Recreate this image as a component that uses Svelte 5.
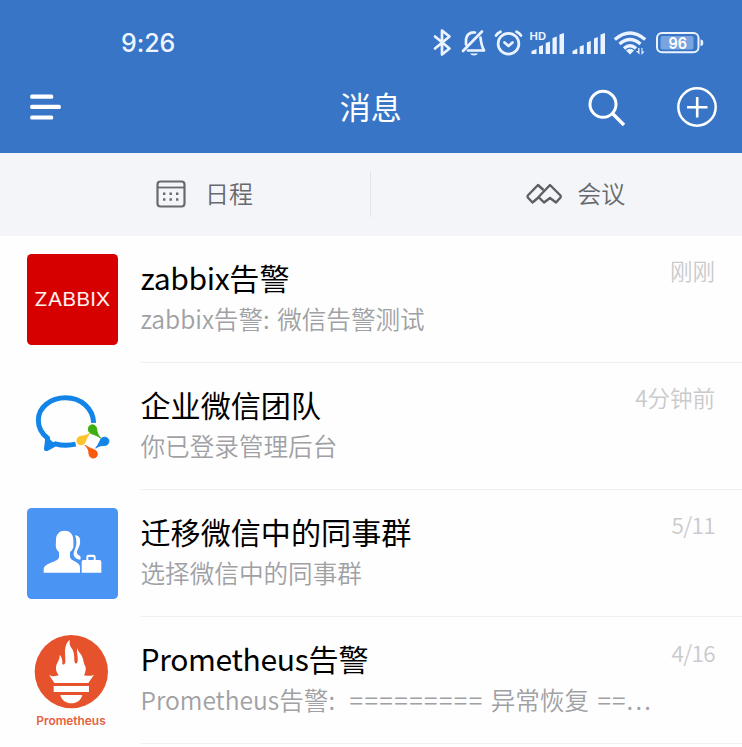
<script>
  const chats = [
    { id: 'zabbix', latin: 'zabbix', name: '告警', pre: 'zabbix', post: '告警: 微信告警测试', time: '刚刚' },
    { id: 'team', latin: '', name: '企业微信团队', pre: '', post: '你已登录管理后台', time: '4分钟前' },
    { id: 'group', latin: '', name: '迁移微信中的同事群', pre: '', post: '选择微信中的同事群', time: '5/11' },
    { id: 'prom', latin: 'Prometheus', name: '告警', pre: 'Prometheus', post: '告警:', eq: '=========', tail: '异常恢复', end: '==', dots: '...', time: '4/16' }
  ];
</script>

<div class="screen">
  <header>
    <div class="status">
      <span class="clock">9:26</span>
      <div class="indicators">
        <svg width="26" height="36" viewBox="430 26 26 36" class="line"><path d="M435 36.5 449.5 48.500 442 54.500V30.500L449.500 36.500 435 48.500" /></svg>
        <svg width="34" height="36" viewBox="456 26 34 36" class="line"><path d="M463 51 482 31.500M466 44.500V41C466 35 469.500 32 475 32.500M480.500 37.500C481 43 481.500 46 484 50.500H468" /><path d="M470 53.500H478Q477 55.500 474 55.500T470 53.500Z" fill="#eaf3ff" stroke="none" /></svg>
        <svg width="38" height="36" viewBox="490 26 38 36" class="line"><circle cx="508.500" cy="43.700" r="10.400" /><path d="M496 35.500Q497.500 33 500.500 31.700M516.500 31.700Q519.500 33 521 35.500M504.500 42.500 508.500 46 512.500 42.500" /></svg>
        <svg width="40" height="36" viewBox="528 26 40 36" fill="#eaf3ff"><text x="529.500" y="39.500" font-size="10" font-weight="700" textLength="16.500" lengthAdjust="spacingAndGlyphs" font-family="Inter, sans-serif">HD</text><path d="M531.500 54V51L536.500 49V54ZM539 54V46.500L543 45V54ZM545.700 54V43L550 41.500V54ZM552.500 54V38L556.800 36.500V54ZM559.500 54V34.500L564 33V54Z" /></svg>
        <svg width="42" height="36" viewBox="568 26 42 36" fill="#eaf3ff"><path d="M572.500 54V51L577.300 48.500V54ZM579.700 54V46.500L583.800 45V54ZM586.900 54V42.500L590.800 41V54ZM594 54V38.500L597.800 37V54ZM600.500 54V34.500L605 33V54Z" /></svg>
        <svg width="40" height="36" viewBox="610 26 40 36" class="line"><path stroke-width="3.400" stroke-linecap="butt" d="M614.800 39.500Q630 26.500 645.200 39.500M619.500 44Q630 35 640.500 44M624 48.500Q630 43 636 48.500" /><path fill="#eaf3ff" stroke="none" d="M626 50.500Q630 47 634 50.500L630 54.500ZM636 51H638.200V48H639.500V54.500ZM641 54.500V48.500L641.500 48V55L644.500 51.500H642.500V48H641Z" /></svg>
        <svg width="60" height="36" viewBox="650 26 60 36"><rect x="657" y="33" width="41.500" height="19.200" rx="5" fill="none" stroke="#eaf3ff" stroke-width="2" /><rect x="660.500" y="36" width="33" height="13.500" rx="2" fill="#78a4df" /><path fill="#eaf3ff" d="M700.500 39.500Q703.300 39.500 703.300 42.700T700.500 46Z" /><text x="668.500" y="48.500" font-size="15.500" font-weight="600" textLength="18.500" lengthAdjust="spacingAndGlyphs" fill="#fff" font-family="Inter, sans-serif">96</text></svg>
      </div>
    </div>
    <div class="nav">
      <div class="side"><svg width="32" height="28" viewBox="0 0 32 28" fill="#fff"><rect y="1.500" x=".2" width="23" height="4.200" rx="1.500" /><rect x=".2" y="11.800" width="30.600" height="4.200" rx="1.500" /><rect x=".2" y="22.400" width="23" height="4.200" rx="1.500" /></svg></div>
      <h1>消息</h1>
      <div class="side right">
        <svg width="40" height="40" viewBox="587 87 40 40" fill="none" stroke="#fff" stroke-width="3"><circle cx="603" cy="104.300" r="13" /><path d="M612.500 113.500 624 125" stroke-width="3.400" /></svg>
        <svg width="42" height="42" viewBox="675.500 86 42 42" fill="none" stroke="#fff" stroke-width="2.500"><circle cx="696.500" cy="107" r="18.700" /><path d="M686.500 107.200H707M696.700 97V117.500" stroke-width="2.600" /></svg>
      </div>
    </div>
  </header>

  <div class="tabs">
    <div class="tab">
      <svg width="32" height="30" viewBox="155.500 179 32 30"><rect x="158" y="181.500" width="27" height="25" rx="3" fill="none" stroke="#666a70" stroke-width="2.200" /><path d="M158 187.500H185" stroke="#666a70" stroke-width="1.800" /><path d="M163.500 192.500h2.400v2.400h-2.400zm6.500 0h2.400v2.400h-2.400zm6.500 0h2.400v2.400h-2.400zm-13 5.800h2.400v2.400h-2.400zm6.500 0h2.400v2.400h-2.400zm6.500 0h2.400v2.400h-2.400z" fill="#666a70" /></svg>
      <span>日程</span>
    </div>
    <i></i>
    <div class="tab second">
      <svg width="38" height="24" viewBox="525.500 181 38 24" fill="none" stroke="#5c6066" stroke-width="2.400" stroke-linejoin="round"><path d="M544 189 538.500 184 528.300 194.500Q527.800 195.500 528.300 196.500L533 201.500 539.500 196" /><path d="M550.500 184 539.500 195.500V196.500L544.500 201.500 550.500 197 556.500 201.500 561 196.500Q561.500 195.500 561 194.500Z" /></svg>
      <span>会议</span>
    </div>
  </div>

  <main>
    {#each chats as c}
      <div class="row">
        {#if c.id === 'zabbix'}
          <svg class="avatar" viewBox="20 27 273 273"><rect x="20" y="27" width="273" height="273" rx="14" fill="#d60000" /><text x="42" y="184" font-size="58" textLength="228" lengthAdjust="spacingAndGlyphs" fill="#fff0ef" font-family="Inter, sans-serif">ZABBIX</text></svg>
        {:else if c.id === 'team'}
          <svg class="avatar" viewBox="23 18.500 273 273">
            <path d="M223 144C221 101 185 69 139 69C93 69 57 98 57 136C57 158 67 176 85 190L82 221 108 207Q137 215 169 208" fill="none" stroke="#1485e8" stroke-width="15" stroke-linejoin="round" />
            <path fill="#1485e8" d="M82 185 74 224Q77 231 84 227L112 211Z" />
            <path fill="#3fae13" d="M207 163C207 146 230 146 232 162C233 174 236 181 244 190C234 182 226 180 217 177Q207 173 207 163Z" stroke="#3fae13" stroke-width="3" />
            <path fill="#1485e8" d="M256 187C273 187 273 211 256 212C244 212 239 213 229 220C237 210 239 204 242 198Q245 187 256 187Z" stroke="#1485e8" stroke-width="3" />
            <path fill="#fa5a0c" d="M234 237C234 254 210 254 209 237C209 226 206 220 197 211C207 218 215 221 223 224Q234 228 234 237Z" stroke="#fa5a0c" stroke-width="3" />
            <path fill="#fcc42c" d="M185 210C168 209 169 185 186 184C197 184 204 181 212 174C205 184 201 192 199 199Q195 210 185 210Z" stroke="#fcc42c" stroke-width="3" />
          </svg>
        {:else if c.id === 'group'}
          <svg class="avatar" viewBox="20 24 273 273"><rect x="20" y="24" width="273" height="273" rx="14" fill="#4a95f3" />
            <path fill="#fff" d="M70 218V208C70 187 116 187 116 170V156C103 145 107 134 107 119C107 102 118 92 133 92S159 102 159 119C159 134 163 145 149 156V170C149 184 179 183 179 202V218Z" />
            <path fill="#fff" d="M164 106C178 107 181 117 179 130C178 142 169 151 170 158C171 166 180 165 181 171L180 179C168 178 158 170 160 159C162 149 168 142 168 130Q170 119 164 106Z" />
            <path fill="#fff" fill-rule="evenodd" d="M189 180H198V171Q198 164 205 164H219Q226 164 226 171V180H237Q243 180 243 186V218H184V186Q184 180 189 180ZM204 180H220V171H204Z" />
          </svg>
        {:else}
          <svg class="avatar tall" viewBox="22 30 273 288"><circle cx="155" cy="140" r="110" fill="#e6522c" />
            <path fill="#fff" d="M88 149C98 156 111 153 117 151C106 137 107 121 116 108Q121 99 120 89Q129 99 128 116C130 121 136 119 137 111C138 96 134 80 137 69Q139 52 151 45Q147 58 155 68C163 79 164 89 164 107C166 118 171 119 174 108C176 96 171 88 172 70Q177 81 183 87C192 99 190 111 197 124Q201 135 193 151Q210 155 223 149L206 174H104Z" />
            <rect x="102" y="183" width="106" height="18" fill="#fff" /><path fill="#fff" d="M122 210H188C184 226 171 235 155 235S126 226 122 210Z" />
            <text x="50" y="300" font-size="36" font-weight="600" textLength="208" lengthAdjust="spacingAndGlyphs" fill="#e6603d" font-family="Inter, sans-serif">Prometheus</text>
          </svg>
        {/if}
        <div class="body">
          <div class="top">
            <h2><span class="latin">{c.latin}</span>{c.name}</h2>
            <time class:date={c.time.includes('/')}>{c.time}</time>
          </div>
          <p><span>{c.pre}</span>{c.post}{#if c.eq}<span class="eq">{c.eq}</span>{c.tail}<span class="end">{c.end}</span><span class="dots">{c.dots}</span>{/if}</p>
        </div>
      </div>
    {/each}
  </main>
</div>

<style>
  :global(body) { margin: 0; overflow: hidden; background: #fefefe; }
  .screen { width: 742px; height: 747px; overflow: hidden; background: #fefefe; font-family: 'Noto Sans CJK SC', sans-serif; }
  svg { display: block; flex: none; }
  h1, h2, p { margin: 0; font-weight: 400; white-space: nowrap; }
  header { height: 152.500px; background: #3875c6; color: #fff; box-sizing: border-box; }
  .status { display: flex; justify-content: space-between; align-items: center; padding: 26px 32px 0 121px; height: 36px; }
  .clock { font: 500 25px/34px Inter, sans-serif; letter-spacing: -0.100px; color: #eef5ff; margin-top: -2px; }
  .indicators { display: flex; }
  .line { fill: none; stroke: #eaf3ff; stroke-width: 2.700; stroke-linecap: round; stroke-linejoin: round; }
  .nav { display: flex; align-items: center; height: 90px; padding: 0 24.500px 0 30px; }
  .side { flex: 1; display: flex; align-items: center; }
  .right { justify-content: flex-end; gap: 48.500px; }
  h1 { font-size: 31px; line-height: 46px; margin: -2px 0 0 -6px; }
  .tabs { display: flex; align-items: center; height: 83px; background: #f4f5f8; color: #66696e; font-size: 24px; line-height: 36px; font-weight: 350; }
  .tabs span { margin-top: -2px; }
  .tabs i { width: 1px; height: 46px; background: #e3e4e7; margin-left: -2px; }
  .tab { flex: 1; display: flex; align-items: center; gap: 18px; padding-left: 155px; box-sizing: border-box; }
  .second { padding-left: 153.500px; gap: 14.500px; }
  .row { display: flex; height: 127.200px; padding-left: 26.500px; }
  .avatar { width: 91px; height: 91px; margin-top: 18px; }
  .tall { height: 96px; }
  .body { flex: 1; min-width: 0; margin-left: 23px; border-bottom: 1px solid #f0f0f1; }
  .top { display: flex; justify-content: space-between; padding: 20px 27px 0 0; height: 44px; }
  h2 { font-size: 30.100px; line-height: 42px; color: #000; }
  .latin { letter-spacing: -0.350px; }
  time { font-size: 22.500px; line-height: 28px; color: #c9cacc; font-weight: 350; margin-top: 0.500px; }
  .date { letter-spacing: -0.600px; }
  p { font-size: 24.600px; line-height: 34px; margin-top: 1px; color: #9fa1a4; font-weight: 350; word-spacing: 2px; }
  .eq { margin: 0 7px 0 14.500px; letter-spacing: 1.400px; }
  .end { margin-left: 8.500px; letter-spacing: 1px; }
  .dots { letter-spacing: 2.200px; }
</style>
